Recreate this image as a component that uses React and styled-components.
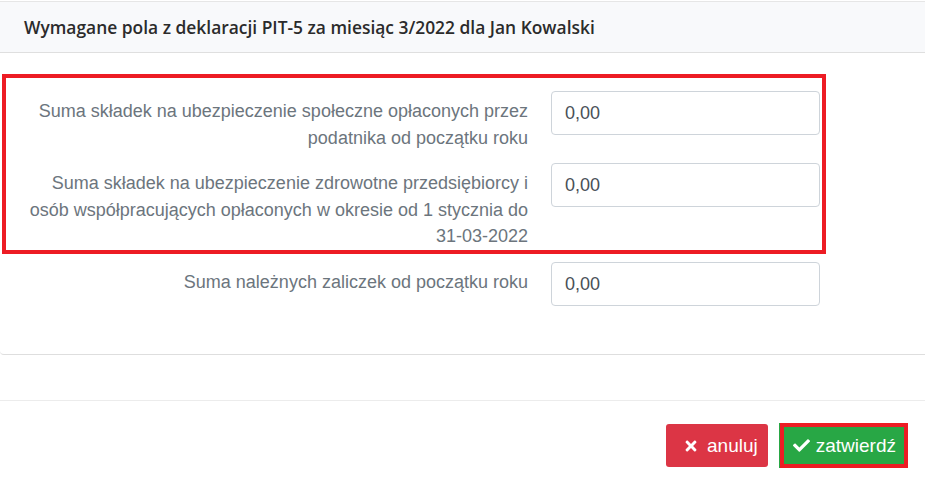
import React from 'react'
import styled, { createGlobalStyle } from 'styled-components'
import { FaTimes, FaCheck } from 'react-icons/fa'

const GlobalStyle = createGlobalStyle`
    body {
        margin: 0;
        background: #fff;
        font-family: "Liberation Sans", Arial, sans-serif;
    }
`

const Modal = styled.div`
    width: 925px;
`

const Card = styled.section`
    border-bottom: 1px solid #dedede;
    border-bottom-left-radius: 4px;
`

const CardHeader = styled.header`
    margin-top: 1px;
    height: 50px;
    display: flex;
    align-items: center;
    padding: 0 24px;
    background: #f8f9fb;
    border-top: 1px solid #e6e6e6;
    border-bottom: 1px solid #dfdfdf;
    font-family: "Open Sans", sans-serif;
    font-weight: 600;
    font-size: 17.4px;
    color: #2b2b2b;
`

const CardBody = styled.div`
    padding: 21px 99px 48px 2px;
`

// red annotation frame from the screenshot
const Highlight = styled.div`
    display: grid;
    row-gap: 12px;
    padding: 13px 2px 0 0;
    border: 4px solid #ed1c24;
`

const Plain = styled.div`
    margin-top: 8.5px;
    padding-left: 4px;
`

const FieldRow = styled.div`
    display: grid;
    grid-template-columns: 522px 269px;
    column-gap: 23px;
    align-items: start;
`

const FieldLabel = styled.label`
    padding: 7px 0 0 20px;
    text-align: right;
    font-size: 18px;
    line-height: 26.5px;
    color: #6c757d;
`

const Input = styled.input`
    box-sizing: border-box;
    height: 44px;
    width: 100%;
    padding: 0 13px;
    border: 1px solid #ced4da;
    border-radius: 4px;
    font-family: "Liberation Sans", Arial, sans-serif;
    font-size: 18px;
    color: #495057;
    outline: none;
`

const Footer = styled.footer`
    margin-top: 45px;
    border-top: 1px solid #ececec;
    padding: 22px 17px 0 0;
    display: flex;
    justify-content: flex-end;
    align-items: center;
    gap: 11px;
`

const Button = styled.button`
    box-sizing: border-box;
    display: inline-flex;
    align-items: center;
    gap: ${props => props.confirm ? '6px' : '8px'};
    height: ${props => props.confirm ? '45px' : '43px'};
    padding: ${props => props.confirm ? '0 8px 0 9px' : '0 10px 0 17px'};
    border: ${props => props.confirm ? '4px solid #ed1c24' : 'none'};
    border-radius: ${props => props.confirm ? '0' : '3px'};
    background: ${props => props.confirm ? '#28a745' : '#dc3545'};
    box-shadow: ${props => props.confirm ? '-1px 0 0 #28a745' : 'none'};
    margin-left: ${props => props.confirm ? '1px' : '0'};
    color: #fff;
    font-family: "Liberation Sans", Arial, sans-serif;
    font-size: 19px;
    cursor: pointer;
`

const fields = [
    { label: 'Suma składek na ubezpieczenie społeczne opłaconych przez podatnika od początku roku', value: '0,00' },
    { label: 'Suma składek na ubezpieczenie zdrowotne przedsiębiorcy i osób współpracujących opłaconych w okresie od 1 stycznia do 31-03-2022', value: '0,00' },
]

const Field = ({ label, value }) => (
    <FieldRow>
        <FieldLabel>{label}</FieldLabel>
        <Input defaultValue={value} />
    </FieldRow>
)

export default function App() {
    return (
        <>
            <GlobalStyle />
            <Modal>
                <Card>
                    <CardHeader>Wymagane pola z deklaracji PIT-5 za miesiąc 3/2022 dla Jan Kowalski</CardHeader>
                    <CardBody>
                        <Highlight>
                            {fields.map(f => <Field key={f.label} {...f} />)}
                        </Highlight>
                        <Plain>
                            <Field label="Suma należnych zaliczek od początku roku" value="0,00" />
                        </Plain>
                    </CardBody>
                </Card>
                <Footer>
                    <Button><FaTimes size={16} />anuluj</Button>
                    <Button confirm="true"><FaCheck size={17} />zatwierdź</Button>
                </Footer>
            </Modal>
        </>
    )
}
